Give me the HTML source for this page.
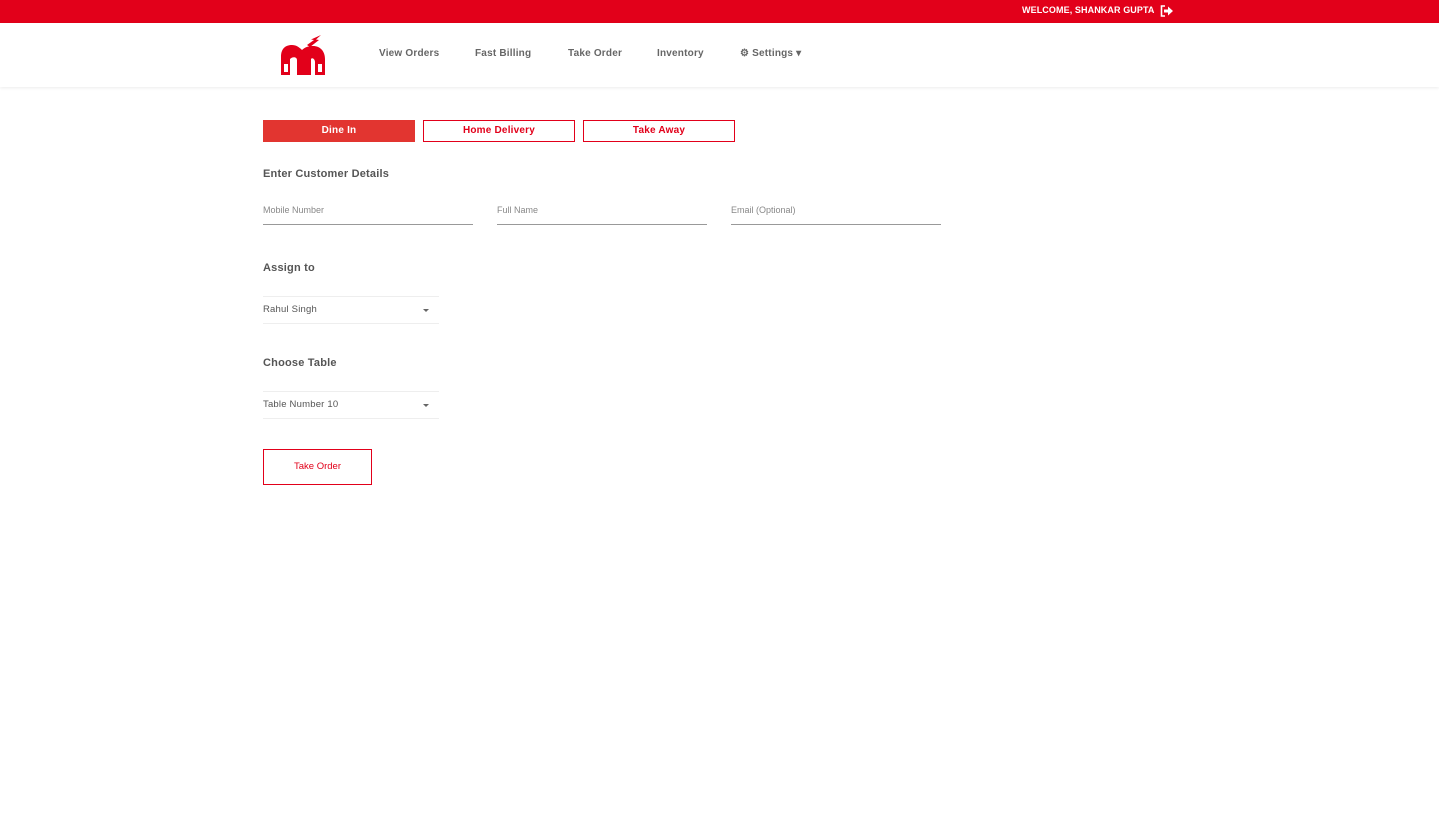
<!DOCTYPE html>
<html><head><style>
*{margin:0;padding:0;box-sizing:border-box}
body{width:1439px;height:825px;background:#fff;font-family:"Liberation Sans",Arial,sans-serif;position:relative;overflow:hidden}
.top{position:absolute;left:0;top:0;width:1439px;height:23px;background:#e2001a}
.welcome{position:absolute;left:1022px;top:5px;color:#fff;font-size:9px;font-weight:bold;letter-spacing:0.1px}
.hdr{position:absolute;left:0;top:23px;width:1439px;height:64px;background:#fff;box-shadow:0 1px 3px rgba(0,0,0,0.08)}
.nav{position:absolute;top:48px;font-size:10px;font-weight:bold;color:#666;letter-spacing:0.2px}
.btn{position:absolute;top:120px;width:152px;height:22px;border:1px solid #e2001a;color:#e2001a;font-size:10px;font-weight:bold;text-align:center;line-height:19px;letter-spacing:0.2px}
.h{position:absolute;left:263px;font-size:11px;font-weight:bold;color:#555;letter-spacing:0.2px}
.inp{position:absolute;top:205px;width:210px;height:20px;border-bottom:1px solid #999;font-size:9px;color:#888}
.sel{position:absolute;left:263px;width:176px;height:28px;border-top:1px solid #eee;border-bottom:1px solid #eee;font-size:9.5px;color:#555;padding-top:7px;letter-spacing:0.2px}
.sel:after{content:"";position:absolute;right:10px;top:12px;border-left:3px solid transparent;border-right:3px solid transparent;border-top:3px solid #666}
</style></head><body>
<div class="top"><span class="welcome">WELCOME, SHANKAR GUPTA</span>
<svg style="position:absolute;left:1160px;top:5px" width="14" height="12" viewBox="0 0 14 12"><path d="M5 1H1.5v10H5" stroke="#fff" stroke-width="1.6" fill="none"/><path d="M4 4.5h4V1.5l5 4.5-5 4.5V7.5H4z" fill="#fff"/></svg></div>
<div class="hdr"></div>
<svg style="position:absolute;left:281px;top:35px" width="45" height="41" viewBox="0 0 45 41">
<path d="M0 40V22C0 13 5 10 11 10C15 10 18 12 21 15C24 12 28 11 32 11C39 11 44 16 44 24V40H34V27C34 24 31 22 30 24V40H16V25C16 22 12 21 9 24V40Z" fill="#e2001a"/>
<rect x="3" y="29" width="4" height="8" fill="#fff"/><rect x="37" y="29" width="4" height="8" fill="#fff"/>
<path d="M26 10L33 5L30 4.5L40 0L35 4.5L38 5L29 12Z" fill="#e2001a"/>
</svg>
<div class="nav" style="left:379px">View Orders</div>
<div class="nav" style="left:475px">Fast Billing</div>
<div class="nav" style="left:568px">Take Order</div>
<div class="nav" style="left:657px">Inventory</div>
<div class="nav" style="left:740px">⚙ Settings ▾</div>
<div class="btn" style="left:263px;background:#e23530;border-color:#e23530;color:#fff">Dine In</div>
<div class="btn" style="left:423px">Home Delivery</div>
<div class="btn" style="left:583px">Take Away</div>
<div class="h" style="top:168px">Enter Customer Details</div>
<div class="inp" style="left:263px">Mobile Number</div>
<div class="inp" style="left:497px">Full Name</div>
<div class="inp" style="left:731px">Email (Optional)</div>
<div class="h" style="top:262px">Assign to</div>
<div class="sel" style="top:296px">Rahul Singh</div>
<div class="h" style="top:357px">Choose Table</div>
<div class="sel" style="top:391px">Table Number 10</div>
<div style="position:absolute;left:263px;top:449px;width:109px;height:36px;border:1px solid #e2001a;color:#e2001a;font-size:9.5px;text-align:center;line-height:33px">Take Order</div>
</body></html>
